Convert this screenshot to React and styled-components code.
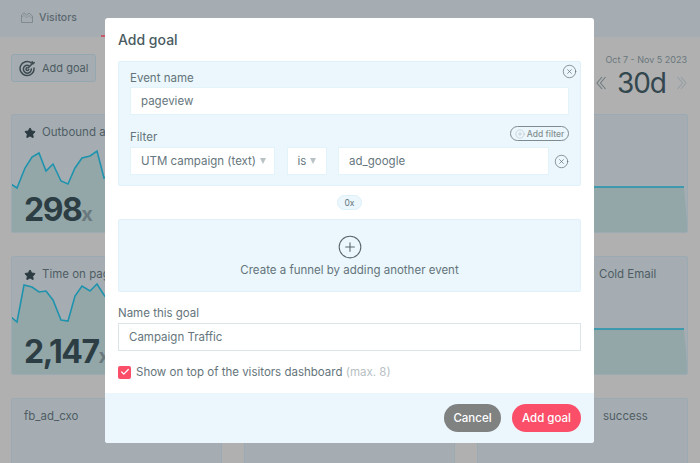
import React from 'react';
import styled, { createGlobalStyle } from 'styled-components';
import { CircleX, CirclePlus, Check, Star } from 'lucide-react';

const GlobalStyle = createGlobalStyle`
  * { box-sizing: border-box; }
  html, body { margin: 0; padding: 0; background: #b0b0b0; }
  body { font-family: Inter, "Liberation Sans", sans-serif; color: #56666d; overflow: hidden; }
`;

const Page = styled.div`
  position: relative;
  width: 700px;
  height: 463px;
  overflow: hidden;
`;

const TopNav = styled.div`
  height: 37px;
  background: #a5adb3;
  display: flex;
  align-items: center;
  padding: 0 0 2px 21px;
  gap: 6px;
  font-size: 10.5px;
  font-weight: 500;
  color: #5b686e;
`;

const ActiveTabLine = styled.div`
  align-self: flex-end;
  width: 60px;
  height: 2px;
  margin: 0 0 -2px 18px;
  background: #c95a69;
`;

const Toolbar = styled.div`
  height: 77px;
  padding: 17px 13px 0 11px;
  display: flex;
  justify-content: space-between;
`;

const GhostButton = styled.div`
  width: 85px;
  height: 28px;
  display: flex;
  align-items: center;
  gap: 6px;
  padding-left: 7px;
  background: #a5adb3;
  border: 1px solid #94a7b0;
  border-radius: 3px;
  font-size: 11px;
  color: #4d5b61;
`;

const Range = styled.div`
  display: flex;
  flex-direction: column;
  align-items: flex-end;
  margin-top: -1px;
`;

const RangeDates = styled.div`
  font-size: 9px;
  line-height: 14px;
  color: #69777c;
`;

const RangeValue = styled.div`
  display: flex;
  align-items: center;
  gap: 11px;
  margin-top: -1px;
  font-size: 28px;
  line-height: 34px;
  letter-spacing: -1px;
  color: #33474f;
`;

const CardGrid = styled.div`
  display: grid;
  grid-template-columns: repeat(3, 211px);
  grid-auto-rows: 119px;
  gap: 23px 22px;
  padding-left: 11px;
`;

const Card = styled.div`
  position: relative;
  background: #a5adb3;
  border: 1px solid #9cabb3;
  border-radius: 2px;
  padding: 10px 12px;
  overflow: hidden;
`;

const CardTitle = styled.div`
  position: relative;
  display: flex;
  align-items: center;
  gap: 6px;
  padding-left: ${p => p.$indent || 0}px;
  font-size: 11.5px;
  line-height: 15px;
  color: #4f5d63;
  white-space: nowrap;
  svg { color: #2c3b42; fill: #2c3b42; }
`;

const CardChart = styled.svg`
  position: absolute;
  left: -1px;
  top: -1px;
  width: 211px;
  height: 119px;
`;

const CardValue = styled.div`
  position: absolute;
  left: 12px;
  bottom: -1px;
  font-size: 32px;
  line-height: 38px;
  font-weight: 700;
  letter-spacing: -1.5px;
  color: #2c3d44;
`;

const Unit = styled.span`
  font-size: 20px;
  letter-spacing: 0;
  color: #6a797d;
`;

const Overlay = styled.div`
  position: absolute;
  inset: 0;
  z-index: 5;
  display: flex;
  justify-content: center;
  align-items: flex-start;
  padding-top: 18px;
`;

const Modal = styled.div`
  width: 489px;
  height: 425px;
  margin-right: 1px;
  background: #fff;
  border-radius: 3px;
  display: flex;
  flex-direction: column;
  overflow: hidden;
`;

const ModalBody = styled.div`
  flex: 1;
  padding: 0 13px;
  display: flex;
  flex-direction: column;
`;

const Title = styled.h2`
  margin: 0;
  height: 43px;
  display: flex;
  align-items: center;
  font-size: 14px;
  font-weight: 500;
  color: #4a5b62;
`;

const EventPanel = styled.div`
  position: relative;
  height: 125px;
  padding: 8px 11px 0;
  background: #ebf7fd;
  border: 1px solid #e0f1f9;
  border-radius: 2px;
`;

const Label = styled.div`
  font-size: 11.5px;
  line-height: 16px;
  color: #64747a;
`;

const EventLabel = styled(Label)`
  margin-bottom: 1px;
`;

const FilterHead = styled.div`
  height: 32px;
  display: flex;
  align-items: flex-end;
  justify-content: space-between;
  padding-bottom: 2px;
`;

const Field = styled.div`
  height: 28px;
  display: flex;
  align-items: center;
  padding: 0 10px;
  background: #fff;
  border: 1px solid #e3f3fa;
  font-size: 11.5px;
  color: #66767d;
  white-space: nowrap;
  width: ${p => p.$w || 'auto'};
`;

const Caret = styled.span`
  margin-left: 4px;
  width: 0;
  height: 0;
  border-left: 3.5px solid transparent;
  border-right: 3.5px solid transparent;
  border-top: 6px solid #b9c2c5;
`;

const FilterRow = styled.div`
  display: flex;
  align-items: center;
  gap: 11.5px;
`;

const IconSlot = styled.span`
  display: inline-flex;
  color: #5f6b70;
  margin-left: -6.5px;
`;

const CornerClose = styled.span`
  position: absolute;
  top: 2px;
  right: 3px;
  display: inline-flex;
  color: #5f6b70;
`;

const AddFilter = styled.div`
  width: 59px;
  height: 15px;
  margin-bottom: 4px;
  display: flex;
  align-items: center;
  justify-content: center;
  gap: 2px;
  border: 1px solid #7d8a90;
  border-radius: 8px;
  font-size: 8.5px;
  font-weight: 500;
  color: #84908f;
  white-space: nowrap;
  svg { color: #a2adb1; }
`;

const Connector = styled.div`
  height: 33px;
  display: flex;
  align-items: center;
  justify-content: center;
`;

const Count = styled.div`
  width: 25px;
  height: 15px;
  display: flex;
  align-items: center;
  justify-content: center;
  background: #ebf7fd;
  border: 1px solid #dcf0f8;
  border-radius: 8px;
  font-size: 8.5px;
  color: #64747a;
`;

const FunnelPanel = styled.div`
  height: 73px;
  display: flex;
  flex-direction: column;
  align-items: center;
  padding-top: 14px;
  gap: 3px;
  background: #ebf7fd;
  border: 1px solid #e0f1f9;
  border-radius: 2px;
  font-size: 11.5px;
  color: #64747a;
  svg { color: #5a686e; }
`;

const NameLabel = styled(Label)`
  margin-top: 13px;
  margin-bottom: 2px;
`;

const NameInput = styled(Field)`
  width: 463px;
  border: 1px solid #dce6e8;
`;

const CheckRow = styled.div`
  display: flex;
  align-items: center;
  gap: 5px;
  margin-top: 14px;
  font-size: 11.5px;
  color: #64747a;
`;

const CheckBox = styled.span`
  width: 13px;
  height: 13px;
  border-radius: 2px;
  background: #fb4e68;
  color: #fff;
  display: inline-flex;
  align-items: center;
  justify-content: center;
`;

const Muted = styled.span`
  color: #b7c0c3;
`;

const Footer = styled.div`
  height: 50px;
  display: flex;
  justify-content: flex-end;
  align-items: center;
  gap: 11px;
  padding: 0 13px;
  background: #ebf7fd;
`;

const Button = styled.div`
  height: 28px;
  width: ${p => p.$w}px;
  display: flex;
  align-items: center;
  justify-content: center;
  border-radius: 14px;
  background: ${p => p.$bg};
  color: #fff;
  font-size: 11.5px;
  font-weight: 500;
`;

const line = pts => pts.map(p => p.join(',')).join(' ');

const row1 = [[0,70],[6,74],[14,54],[21,43],[28,39],[35,57],[42,50],[50,67],[57,70],[64,54],[71,44],[79,42],[86,37],[93,64],[100,60],[110,70],[120,50],[130,40],[145,65],[160,45],[180,60],[211,50]];
const row2 = [[0,61],[6,66],[13,29],[21,31],[28,36],[35,35],[42,44],[50,64],[57,65],[64,40],[71,30],[79,35],[86,28],[93,39],[110,60],[130,40],[150,55],[180,45],[211,50]];

const Chart = ({ pts }) => (
  <CardChart viewBox="0 0 211 119">
    <polygon points={`${line(pts)} 211,119 0,119`} fill="#93a7a9" />
    <polyline points={line(pts)} fill="none" stroke="#1f93ad" strokeWidth="1.6" />
  </CardChart>
);

const flatLine = [[0,73],[207,73]];

const cards = [
  { id: 'a', title: 'Outbound a', star: true, value: '298', pts: row1 },
  { id: 'b', pts: [[0,60],[211,60]] },
  { id: 'c', pts: flatLine },
  { id: 'd', title: 'Time on pag', star: true, value: '2,147', pts: row2 },
  { id: 'e', pts: [[0,60],[211,60]] },
  { id: 'f', title: 'Cold Email', indent: 109, pts: flatLine },
  { id: 'g', title: 'fb_ad_cxo' },
  { id: 'h' },
  { id: 'i', title: 'success', indent: 113 },
];

const TargetIcon = () => (
  <svg width="17" height="17" viewBox="0 0 17 17" fill="none" stroke="#3c4a50" strokeWidth="1.5">
    <path d="M12.5 3.1A7 7 0 1 0 15 7.5" />
    <path d="M10.2 5.6A4 4 0 1 0 12.3 8.4" />
    <path d="M8.5 7.6A1.4 1.4 0 1 0 9.8 9" />
    <path d="M8.6 8.4L14 3" />
    <path d="M12.5 3.2L13 1l1 1.2L16 2.6l-1.8 1.6z" fill="#3c4a50" strokeWidth="0.6" />
  </svg>
);

const VisitorsIcon = () => (
  <svg width="12" height="11" viewBox="0 0 12 11" fill="none" stroke="#7c878c" strokeWidth="0.9">
    <path d="M0.5 3v7.5h11V4" />
    <path d="M0.5 3L3 0.8 5.5 3 8 1.2 11.5 4" />
    <path d="M0.5 5.5L3 3.3 5.5 5.5 8 3.7 11.5 6.5" strokeWidth="0.6" />
  </svg>
);

const ChevronSvg = styled.svg`
  transform: ${p => (p.$flip ? 'scaleX(-1)' : 'none')};
`;

const DoubleChevron = ({ flip, color }) => (
  <ChevronSvg $flip={flip} width="10" height="14" viewBox="0 0 10 14" fill="none" stroke={color} strokeWidth="1.1">
    <path d="M6 1L1 7l5 6" />
    <path d="M9.5 1L4.5 7l5 6" />
  </ChevronSvg>
);

const X = () => <CircleX size={15} strokeWidth={1.1} />;

export default function App() {
  return (
    <Page>
      <GlobalStyle />
      <TopNav><VisitorsIcon />Visitors<ActiveTabLine /></TopNav>
      <Toolbar>
        <GhostButton><TargetIcon />Add goal</GhostButton>
        <Range>
          <RangeDates>Oct 7 - Nov 5 2023</RangeDates>
          <RangeValue>
            <DoubleChevron color="#6f7c81" />
            30d
            <DoubleChevron flip color="#959fa3" />
          </RangeValue>
        </Range>
      </Toolbar>
      <CardGrid>
        {cards.map(c => (
          <Card key={c.id}>
            {c.pts && <Chart pts={c.pts} />}
            {c.title && (
              <CardTitle $indent={c.indent}>{c.star && <Star size={12} />}{c.title}</CardTitle>
            )}
            {c.value && <CardValue>{c.value}<Unit>x</Unit></CardValue>}
          </Card>
        ))}
      </CardGrid>
      <Overlay>
        <Modal>
          <ModalBody>
            <Title>Add goal</Title>
            <EventPanel>
              <CornerClose><X /></CornerClose>
              <EventLabel>Event name</EventLabel>
              <Field>pageview</Field>
              <FilterHead>
                <Label>Filter</Label>
                <AddFilter><CirclePlus size={10} strokeWidth={1} />Add filter</AddFilter>
              </FilterHead>
              <FilterRow>
                <Field $w="145px">UTM campaign (text)<Caret /></Field>
                <Field $w="40px">is<Caret /></Field>
                <Field $w="212px">ad_google</Field>
                <IconSlot><X /></IconSlot>
              </FilterRow>
            </EventPanel>
            <Connector><Count>0x</Count></Connector>
            <FunnelPanel>
              <CirclePlus size={26} strokeWidth={1} />
              Create a funnel by adding another event
            </FunnelPanel>
            <NameLabel>Name this goal</NameLabel>
            <NameInput>Campaign Traffic</NameInput>
            <CheckRow>
              <CheckBox><Check size={10} strokeWidth={3} /></CheckBox>
              <span>Show on top of the visitors dashboard <Muted>(max. 8)</Muted></span>
            </CheckRow>
          </ModalBody>
          <Footer>
            <Button $w={57} $bg="#808282">Cancel</Button>
            <Button $w={69} $bg="#fb4e68">Add goal</Button>
          </Footer>
        </Modal>
      </Overlay>
    </Page>
  );
}
